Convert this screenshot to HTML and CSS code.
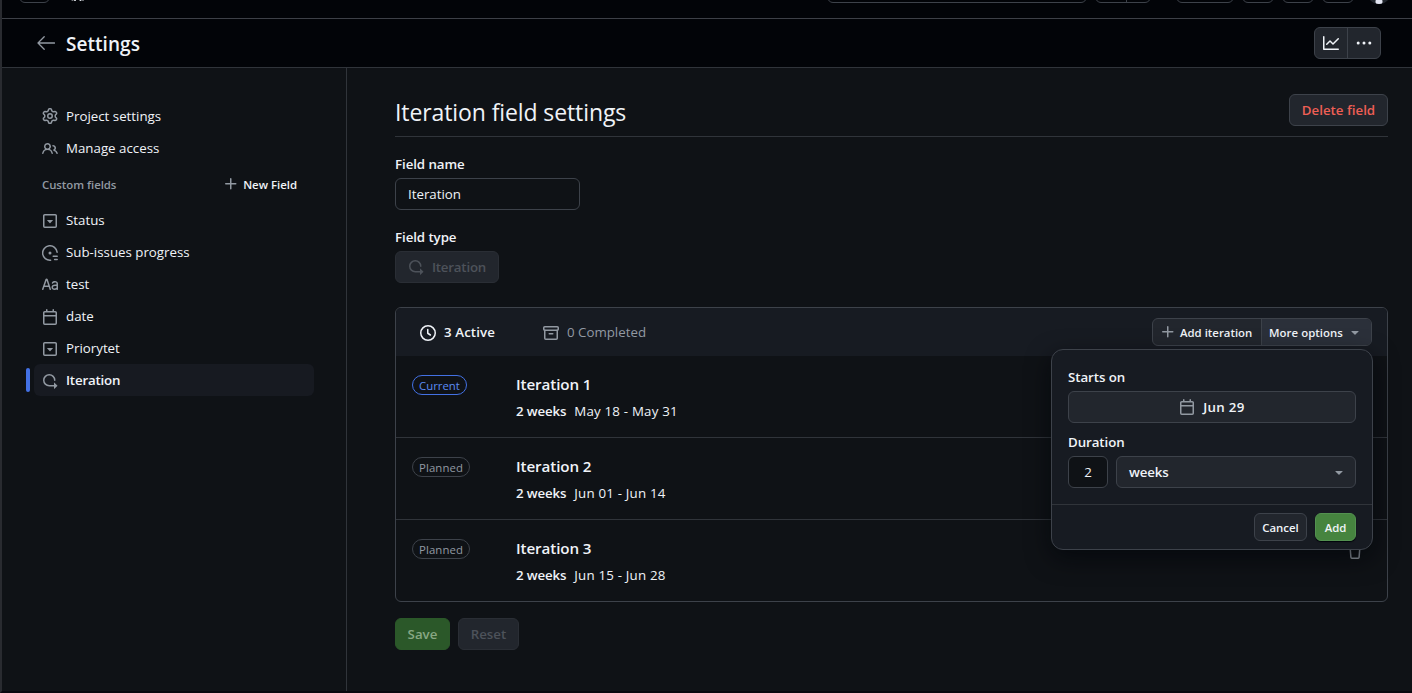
FILE: index.html
```html
<!DOCTYPE html>
<html lang="en">
<head>
<meta charset="utf-8">
<title>Settings</title>
<link rel="stylesheet" href="styles.css">
</head>
<body>
<svg class="sprite" aria-hidden="true">
  <symbol id="gear" viewBox="0 0 16 16"><path d="M8 0a8.2 8.2 0 0 1 .701.031C9.444.095 9.99.645 10.16 1.29l.288 1.107c.018.066.079.158.212.224.231.114.454.243.668.386.123.082.233.09.299.071l1.103-.303c.644-.176 1.392.021 1.82.63.27.385.506.792.704 1.218.315.675.111 1.422-.364 1.891l-.814.806c-.049.048-.098.147-.088.294.016.257.016.515 0 .772-.01.147.038.246.088.294l.814.806c.475.469.679 1.216.364 1.891a7.977 7.977 0 0 1-.704 1.217c-.428.61-1.176.807-1.82.63l-1.102-.302c-.067-.019-.177-.011-.3.071a5.909 5.909 0 0 1-.668.386c-.133.066-.194.158-.211.224l-.29 1.106c-.168.646-.715 1.196-1.458 1.26a8.006 8.006 0 0 1-1.402 0c-.743-.064-1.289-.614-1.458-1.26l-.289-1.106c-.018-.066-.079-.158-.212-.224a5.738 5.738 0 0 1-.668-.386c-.123-.082-.233-.09-.299-.071l-1.103.303c-.644.176-1.392-.021-1.82-.63a8.12 8.12 0 0 1-.704-1.218c-.315-.675-.111-1.422.363-1.891l.815-.806c.05-.048.098-.147.088-.294a6.214 6.214 0 0 1 0-.772c.01-.147-.038-.246-.088-.294l-.815-.806C.635 6.045.431 5.298.746 4.623a7.92 7.92 0 0 1 .704-1.217c.428-.61 1.176-.807 1.82-.63l1.102.302c.067.019.177.011.3-.071.214-.143.437-.272.668-.386.133-.066.194-.158.211-.224l.29-1.106C6.009.645 6.556.095 7.299.03 7.53.01 7.764 0 8 0Zm-.571 1.525c-.036.003-.108.036-.137.146l-.289 1.105c-.147.561-.549.967-.998 1.189-.173.086-.34.183-.5.29-.417.278-.97.423-1.529.27l-1.103-.303c-.109-.03-.175.016-.195.045-.22.312-.412.644-.573.99-.014.031-.021.11.059.19l.815.806c.411.406.562.957.53 1.456a4.709 4.709 0 0 0 0 .582c.032.499-.119 1.05-.53 1.456l-.815.806c-.081.08-.073.159-.059.19.162.346.353.677.573.989.02.03.085.076.195.046l1.102-.303c.56-.153 1.113-.008 1.53.27.161.107.328.204.501.29.447.222.85.629.997 1.189l.289 1.105c.029.109.101.143.137.146a6.6 6.6 0 0 0 1.142 0c.036-.003.108-.036.137-.146l.289-1.105c.147-.561.549-.967.998-1.189.173-.086.34-.183.5-.29.417-.278.97-.423 1.529-.27l1.103.303c.109.029.175-.016.195-.045.22-.313.411-.644.573-.99.014-.031.021-.11-.059-.19l-.815-.806c-.411-.406-.562-.957-.53-1.456a4.709 4.709 0 0 0 0-.582c-.032-.499.119-1.05.53-1.456l.815-.806c.081-.08.073-.159.059-.19a6.464 6.464 0 0 0-.573-.989c-.02-.03-.085-.076-.195-.046l-1.102.303c-.56.153-1.113.008-1.53-.27a4.44 4.44 0 0 0-.501-.29c-.447-.222-.85-.629-.997-1.189l-.289-1.105c-.029-.11-.101-.143-.137-.146a6.6 6.6 0 0 0-1.142 0ZM11 8a3 3 0 1 1-6 0 3 3 0 0 1 6 0ZM9.5 8a1.5 1.5 0 1 0-3.001.001A1.5 1.5 0 0 0 9.5 8Z"/></symbol>
  <symbol id="people" viewBox="0 0 16 16"><path d="M2 5.5a3.5 3.5 0 1 1 5.898 2.549 5.508 5.508 0 0 1 3.034 4.084.75.75 0 1 1-1.482.235 4 4 0 0 0-7.9 0 .75.75 0 0 1-1.482-.236A5.507 5.507 0 0 1 3.102 8.05 3.493 3.493 0 0 1 2 5.5ZM11 4a3.001 3.001 0 0 1 2.22 5.018 5.01 5.01 0 0 1 2.56 3.012.749.749 0 0 1-.885.954.752.752 0 0 1-.549-.514 3.507 3.507 0 0 0-2.522-2.372.75.75 0 0 1-.574-.73v-.352a.75.75 0 0 1 .416-.672A1.5 1.5 0 0 0 11 5.5.75.75 0 0 1 11 4Zm-5.5-.5a2 2 0 1 0-.001 3.999A2 2 0 0 0 5.5 3.5Z"/></symbol>
  <symbol id="plus" viewBox="0 0 16 16"><path d="M7.75 2a.75.75 0 0 1 .75.75V7h4.25a.75.75 0 0 1 0 1.5H8.5v4.25a.75.75 0 0 1-1.5 0V8.5H2.75a.75.75 0 0 1 0-1.5H7V2.75A.75.75 0 0 1 7.75 2Z"/></symbol>
  <symbol id="select" viewBox="0 0 16 16"><path d="m5.06 7.356 2.795 2.833c.08.081.21.081.29 0l2.794-2.833c.13-.131.038-.356-.145-.356H5.206c-.183 0-.275.225-.145.356ZM1 2.75C1 1.784 1.784 1 2.75 1h10.5c.966 0 1.75.784 1.75 1.75v10.5A1.75 1.75 0 0 1 13.25 15H2.75A1.75 1.75 0 0 1 1 13.25Zm1.75-.25a.25.25 0 0 0-.25.25v10.5c0 .138.112.25.25.25h10.5a.25.25 0 0 0 .25-.25V2.75a.25.25 0 0 0-.25-.25Z"/></symbol>
  <symbol id="progress" viewBox="0 0 16 16"><g fill="none" stroke="currentColor" stroke-width="1.5" stroke-linecap="round"><path d="M15.1 7.2A7.25 7.25 0 1 0 8.6 15.2M11.2 11.2h4M12.6 14.5h2.6"/></g><circle cx="8" cy="8" r="1.5"/></symbol>
  <symbol id="type" viewBox="0 0 16 16"><path d="M6.71 10H2.332l-.874 2.498a.75.75 0 0 1-1.415-.496l3.39-9.688a1.217 1.217 0 0 1 2.302.018l3.227 9.681a.75.75 0 0 1-1.423.474Zm3.13-4.358C10.53 4.374 11.87 4 13 4c1.5 0 3 .939 3 2.601v5.649a.75.75 0 0 1-1.448.275C13.995 12.82 13.3 13 12.5 13c-.77 0-1.514-.231-2.078-.709-.577-.488-.922-1.199-.922-2.041 0-.694.265-1.411.887-1.944C11 7.78 11.88 7.5 13 7.5h1.5v-.899c0-.54-.5-1.101-1.5-1.101-.869 0-1.528.282-1.84.858a.75.75 0 1 1-1.32-.716ZM6.21 8.5 4.574 3.594 2.857 8.5Zm8.29.5H13c-.881 0-1.375.22-1.637.444-.253.217-.363.5-.363.806 0 .408.155.697.39.896.249.21.63.354 1.11.354.732 0 1.26-.209 1.588-.449.35-.257.412-.495.412-.551Z"/></symbol>
  <symbol id="calendar" viewBox="0 0 16 16"><path d="M4.75 0a.75.75 0 0 1 .75.75V2h5V.75a.75.75 0 0 1 1.5 0V2h1.25c.966 0 1.75.784 1.75 1.75v10.5A1.75 1.75 0 0 1 13.25 16H2.75A1.75 1.75 0 0 1 1 14.25V3.75C1 2.784 1.784 2 2.75 2H4V.75A.75.75 0 0 1 4.75 0ZM2.5 7.5v6.75c0 .138.112.25.25.25h10.5a.25.25 0 0 0 .25-.25V7.5Zm10.75-4H2.75a.25.25 0 0 0-.25.25V6h11V3.75a.25.25 0 0 0-.25-.25Z"/></symbol>
  <symbol id="iterations" viewBox="0 0 16 16"><path d="M2.5 7.25a4.75 4.75 0 0 1 9.5 0 .75.75 0 0 0 1.5 0 6.25 6.25 0 1 0-6.25 6.25H12v2.146c0 .223.27.335.427.177l2.896-2.896a.25.25 0 0 0 0-.354l-2.896-2.896a.25.25 0 0 0-.427.177V12H7.25A4.75 4.75 0 0 1 2.5 7.25Z"/></symbol>
  <symbol id="clock" viewBox="0 0 16 16"><g fill="none" stroke="currentColor" stroke-width="1.5" stroke-linecap="round" stroke-linejoin="round"><circle cx="8" cy="8" r="7.25"/><path d="M7.75 4.5v3.75L10.4 10"/></g></symbol>
  <symbol id="archive" viewBox="0 0 16 16"><g fill="none" stroke="currentColor" stroke-width="1.5" stroke-linecap="round" stroke-linejoin="round"><rect x=".75" y="1.75" width="14.5" height="3.5" rx="1"/><path d="M1.75 5.25v8c0 .55.45 1 1 1h10.5c.55 0 1-.45 1-1v-8M6.25 8.75h3.5"/></g></symbol>
  <symbol id="down" viewBox="0 0 16 16"><path d="m4.427 7.427 3.396 3.396a.25.25 0 0 0 .354 0l3.396-3.396A.25.25 0 0 0 11.396 7H4.604a.25.25 0 0 0-.177.427Z"/></symbol>
  <symbol id="graph" viewBox="0 0 16 16"><path d="M1.5 1.75V13.5h13.75a.75.75 0 0 1 0 1.5H.75a.75.75 0 0 1-.75-.75V1.75a.75.75 0 0 1 1.5 0Zm14.28 2.53-5.25 5.25a.75.75 0 0 1-1.06 0L7 7.06 4.28 9.78a.751.751 0 0 1-1.042-.018.751.751 0 0 1-.018-1.042l3.25-3.25a.75.75 0 0 1 1.06 0L10 7.94l4.72-4.72a.751.751 0 0 1 1.042.018.751.751 0 0 1 .018 1.042Z"/></symbol>
  <symbol id="dots" viewBox="0 0 16 16"><circle cx="2.2" cy="8" r="1.5"/><circle cx="8" cy="8" r="1.5"/><circle cx="13.8" cy="8" r="1.5"/></symbol>
  <symbol id="trash" viewBox="0 0 16 16"><path fill="none" stroke="currentColor" stroke-width="1.5" stroke-linecap="round" stroke-linejoin="round" d="M1.8 3.75h12.4M5.75 3.5V1.75a1 1 0 0 1 1-1h2.5a1 1 0 0 1 1 1V3.5M3.3 6.75l.6 7.5c.05.6.4 1 1 1h6.2c.6 0 .95-.4 1-1l.6-7.5"/></symbol>
</svg>

<div class="app">
  <div class="topbar">
    <span class="stub stub-menu"></span>
    <svg class="logo" viewBox="0 0 14 3"><path d="M1.500 0v.5M4 0v1M9.500 0v1M12 0v.5" fill="none" stroke="currentColor" stroke-width="1.8"/></svg>
    <span class="stub stub-search"></span>
    <span class="stub stub-split"><i></i></span>
    <span class="stub stub-new"></span>
    <span class="stub stub-icon"></span>
    <span class="stub stub-icon"></span>
    <span class="stub stub-icon"></span>
    <span class="avatar"></span>
  </div>

  <header class="header">
    <svg class="back" viewBox="0 0 18 14"><path d="M7.2.8 1 7l6.200 6.200M1 7h16.500" fill="none" stroke="currentColor" stroke-width="1.3" stroke-linecap="round" stroke-linejoin="round"/></svg>
    <h1>Settings</h1>
    <div class="tools">
      <button class="tool"><svg class="icon"><use href="#graph"/></svg></button>
      <button class="tool"><svg class="icon"><use href="#dots"/></svg></button>
    </div>
  </header>

  <div class="body">
    <nav class="sidebar">
      <a class="item"><svg class="icon"><use href="#gear"/></svg><span>Project settings</span></a>
      <a class="item"><svg class="icon"><use href="#people"/></svg><span>Manage access</span></a>
      <div class="group">
        <span class="group-title">Custom fields</span>
        <button class="new-field"><svg class="icon"><use href="#plus"/></svg><span>New Field</span></button>
      </div>
      <a class="item"><svg class="icon"><use href="#select"/></svg><span>Status</span></a>
      <a class="item"><svg class="icon"><use href="#progress"/></svg><span>Sub-issues progress</span></a>
      <a class="item"><svg class="icon"><use href="#type"/></svg><span>test</span></a>
      <a class="item"><svg class="icon"><use href="#calendar"/></svg><span>date</span></a>
      <a class="item"><svg class="icon"><use href="#select"/></svg><span>Priorytet</span></a>
      <a class="item active"><svg class="icon"><use href="#iterations"/></svg><span>Iteration</span></a>
    </nav>

    <main class="content">
      <div class="title-row">
        <h2>Iteration field settings</h2>
        <button class="btn danger">Delete field</button>
      </div>

      <div class="label">Field name</div>
      <div class="input">Iteration</div>
      <div class="label type-label">Field type</div>
      <button class="btn disabled type-btn"><svg class="icon"><use href="#iterations"/></svg><span>Iteration</span></button>

      <section class="table">
        <div class="table-head">
          <div class="tab on"><svg class="icon"><use href="#clock"/></svg><span>3 Active</span></div>
          <div class="tab"><svg class="icon"><use href="#archive"/></svg><span>0 Completed</span></div>
          <div class="split">
            <button class="add-iteration"><svg class="icon"><use href="#plus"/></svg><span>Add iteration</span></button>
            <button class="more"><span>More options</span><svg class="icon"><use href="#down"/></svg></button>
          </div>
        </div>
        <div class="row">
          <div class="state"><span class="badge current">Current</span></div>
          <div><div class="name">Iteration 1</div><div class="dates"><b>2 weeks</b><span>May 18 - May 31</span></div></div>
        </div>
        <div class="row">
          <div class="state"><span class="badge">Planned</span></div>
          <div><div class="name">Iteration 2</div><div class="dates"><b>2 weeks</b><span>Jun 01 - Jun 14</span></div></div>
        </div>
        <div class="row">
          <div class="state"><span class="badge">Planned</span></div>
          <div><div class="name">Iteration 3</div><div class="dates"><b>2 weeks</b><span>Jun 15 - Jun 28</span></div></div>
          <svg class="icon trash"><use href="#trash"/></svg>
        </div>

        <div class="popover">
          <div class="form">
            <div class="label">Starts on</div>
            <button class="btn date-btn"><svg class="icon"><use href="#calendar"/></svg><span>Jun 29</span></button>
            <div class="label duration-label">Duration</div>
            <div class="duration">
              <div class="input count">2</div>
              <button class="btn unit"><span>weeks</span><svg class="icon"><use href="#down"/></svg></button>
            </div>
          </div>
          <div class="actions">
            <button class="btn small cancel">Cancel</button>
            <button class="btn small add">Add</button>
          </div>
        </div>
      </section>

      <div class="footer">
        <button class="btn save">Save</button>
        <button class="btn disabled reset">Reset</button>
      </div>
    </main>
  </div>
</div>
</body>
</html>
```
FILE: styles.css
```css
* { box-sizing: border-box; }

body {
  margin: 0;
  background: #0f1216;
  color: #f0f3f8;
  font: 13.3px/20px "Open Sans", "Noto Sans", sans-serif;
  overflow: hidden;
}

h1, h2 { margin: 0; }
button { font: inherit; color: inherit; letter-spacing: inherit; margin: 0; padding: 0; white-space: nowrap; }
.sprite { display: none; }
.icon { width: 16px; height: 16px; flex: none; fill: currentColor; color: #9299a2; }

.app {
  height: 693px;
  display: flex;
  flex-direction: column;
  border-left: 2px solid #292b30;
  border-bottom: 2px solid #08080e;
}

/* Global bar, scrolled almost out of view */
.topbar {
  flex: none;
  height: 19px;
  padding: 0 21px 15px 17px;
  display: flex;
  align-items: flex-end;
  overflow: hidden;
  background: #020408;
  border-bottom: 1px solid #3d4047;
}
.stub { flex: none; height: 32px; border: 1px solid #3d424a; border-radius: 6px; }
.stub-menu { width: 31px; }
.logo { width: 14px; height: 3px; margin-left: 21px; color: #d8dce2; }
.stub-search { width: 260px; margin-left: auto; }
.stub-split { width: 56px; margin-left: 8px; display: flex; justify-content: center; padding-left: 7px; }
.stub-split i { width: 1px; background: #3d424a; }
.stub-new { width: 58px; margin: 0 8px 0 25px; }
.stub-icon { width: 32px; margin-right: 8px; }
.avatar { flex: none; width: 24px; height: 24px; margin: 0 0 -1px 5px; border-radius: 50%; background: radial-gradient(circle at 50% 90%, #e2e5f2 3px, #20252c 4px); }

.header {
  flex: none;
  height: 49px;
  padding: 0 31px 0 35px;
  display: flex;
  align-items: center;
  background: #020408;
  border-bottom: 1px solid #30343a;
}
.back { width: 18px; height: 14px; color: #9299a2; margin-bottom: 1px; }
h1 { margin-left: 11px; font-size: 19px; line-height: 28px; font-weight: 600; letter-spacing: 0.05px; padding-top: 2px; }
.tools { margin-left: auto; display: flex; border: 1px solid #3d424a; border-radius: 6px; background: #22262d; }
.tool { width: 32px; height: 30px; border: 0; background: none; display: flex; align-items: center; justify-content: center; }
.tool + .tool { width: 33px; border-left: 1px solid #3d424a; }
.tool .icon { color: #f0f3f8; }

.body { flex: 1; display: flex; min-height: 0; }
.sidebar { width: 345px; padding: 32px 32px 0; border-right: 1px solid #30343a; }
.item { position: relative; display: flex; align-items: center; gap: 8px; height: 32px; padding: 0 8px; border-radius: 6px; }
.item .icon { margin-top: 1px; }
.item:first-child .icon { margin-top: 0; }
.item.active { background: #171a21; font-weight: 600; letter-spacing: -0.2px; }
.item.active::before { content: ""; position: absolute; left: -8px; top: 4px; width: 4px; height: 24px; border-radius: 3px; background: #4371e4; }
.group { display: flex; align-items: center; justify-content: space-between; height: 40px; padding: 0 17px 0 8px; font-size: 11.4px; font-weight: 600; }
.group span { padding-top: 1px; }
.group-title { color: #9299a2; letter-spacing: -0.05px; }
.new-field { display: flex; align-items: center; gap: 4px; border: 0; background: none; }

.content { flex: 1; padding: 24px 24px 0 48px; }
.title-row { display: flex; justify-content: space-between; align-items: flex-start; height: 45px; border-bottom: 1px solid #30343a; margin-bottom: 17px; }
.title-row .btn { margin-top: 2px; width: 99px; }
h2 { font-size: 23px; line-height: 38px; font-weight: 400; letter-spacing: -0.1px; padding-top: 1px; }

.label { font-weight: 600; height: 20px; margin-bottom: 4px; letter-spacing: -0.08px; }
.input { width: 185px; height: 32px; line-height: 30px; padding: 0 12px; border: 1px solid #3d424a; border-radius: 6px; background: #0f1216; }
.type-label { margin-top: 17px; }
.btn { display: flex; align-items: center; justify-content: center; gap: 8px; height: 32px; font-weight: 600; color: #f0f3f8; background: #22262d; border: 1px solid #3d424a; border-radius: 6px; }
.danger { color: #ee5f55; }
.disabled { color: #4d525a; border-color: #2a2e35; }
.disabled .icon { color: #4d525a; }
.type-btn { width: 104px; letter-spacing: -0.2px; }

.table { position: relative; height: 295px; margin-top: 24px; border: 1px solid #3d424a; border-radius: 6px; }
.table-head { height: 48px; display: flex; align-items: center; padding: 0 15px 0 24px; background: #171b22; border-radius: 5px 5px 0 0; }
.tab { display: flex; align-items: center; gap: 8px; color: #9299a2; margin-right: 48px; }
.tab .icon { margin-top: 1px; }
.tab.on { color: #f0f3f8; font-weight: 600; letter-spacing: 0.1px; }
.tab.on .icon { color: #f0f3f8; }
.split { display: flex; width: 220px; height: 28px; margin-left: auto; border: 1px solid #3d424a; border-radius: 6px; background: #22262d; font-size: 11.4px; font-weight: 600; overflow: hidden; }
.split button { border: 0; background: none; display: flex; align-items: center; gap: 4px; height: 26px; }
.split span { padding-top: 1px; }
.split .add-iteration { width: 108px; padding-left: 7px; }
.split .more { flex: 1; padding-left: 7px; background: #2b303a; border-left: 1px solid #3d424a; letter-spacing: 0.05px; }

.row { position: relative; display: flex; height: 82px; padding: 18px 16px 0; border-bottom: 1px solid #30343a; }
.row:nth-child(4) { border-bottom: 0; }
.state { width: 104px; padding-top: 1px; }
.badge { display: inline-block; height: 20px; line-height: 19px; padding: 0 6px; border: 1px solid #3d424a; border-radius: 10px; font-size: 11.4px; font-weight: 500; color: #9299a2; vertical-align: top; letter-spacing: 0.1px; }
.current { border-color: #4371e4; color: #5b8cf5; letter-spacing: 0; }
.name { font-size: 15.2px; font-weight: 600; letter-spacing: -0.1px; }
.dates { display: flex; gap: 8px; margin-top: 7px; font-weight: 400; letter-spacing: 0.2px; }
.dates b { font-weight: 600; letter-spacing: -0.15px; }
.trash { margin: 5px 8px 0 auto; }

.popover { position: absolute; right: 14px; top: 41px; width: 322px; height: 201px; border: 1px solid #3d424a; border-radius: 12px; background: #171b22; box-shadow: 0 8px 24px rgba(1, 4, 9, .65); }
.form { height: 155px; padding: 17px 16px 0; border-bottom: 1px solid #30343a; }
.date-btn { width: 288px; letter-spacing: 0.3px; }
.duration-label { margin-top: 9px; }
.duration { display: flex; gap: 8px; }
.count { width: 40px; padding: 0; text-align: center; }
.unit { flex: 1; justify-content: space-between; padding: 0 8px 0 12px; letter-spacing: -0.15px; }
.actions { display: flex; justify-content: flex-end; gap: 8px; padding: 8px 16px; }
.small { height: 28px; font-size: 11.4px; padding-top: 1px; }
.cancel { width: 53px; }
.add { width: 41px; background: #46843f; border-color: #539150; box-shadow: 0 1px 1px #01040a; }

.footer { display: flex; gap: 8px; margin-top: 16px; }
.save { width: 55px; color: #88a783; background: #2b5829; border-color: #2b5829; }
.reset { width: 61px; }
```
